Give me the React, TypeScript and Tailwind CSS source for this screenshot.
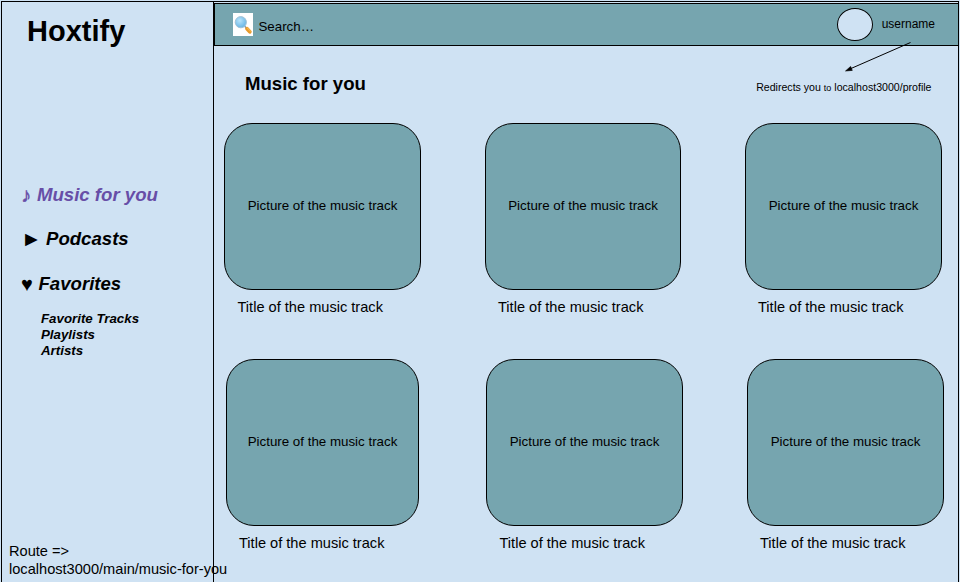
const tracks = [
  { card: "ml-[10px] w-[197px]", title: "ml-[23.5px]", cell: "w-[261px]" },
  { card: "ml-[10px] w-[196px]", title: "ml-[23px]", cell: "w-[260px]" },
  { card: "ml-[10px] w-[197px]", title: "ml-[23px]", cell: "w-[210px]" },
];

const moreTracks = [
  { card: "ml-[12px] w-[193px]", title: "ml-[25px]", cell: "w-[261px]" },
  { card: "ml-[11px] w-[197px]", title: "ml-[24.5px]", cell: "w-[260px]" },
  { card: "ml-[12px] w-[197px]", title: "ml-[25px]", cell: "w-[210px]" },
];

type Track = (typeof tracks)[number];

function TrackRow({ items }: { items: Track[] }) {
  return (
    <div className="flex h-[236px]">
      {items.map((t, i) => (
        <div key={i} className={`shrink-0 ${t.cell}`}>
          <div
            className={`flex h-[167px] items-center justify-center rounded-[28px] border border-black bg-[#76a5af] pb-[2px] text-[13.33px] leading-[16px] whitespace-nowrap ${t.card}`}
          >
            Picture of the music track
          </div>
          <div className={`mt-[8px] text-[14.6px] leading-[18px] whitespace-nowrap ${t.title}`}>
            Title of the music track
          </div>
        </div>
      ))}
    </div>
  );
}

function SearchIcon() {
  return (
    <svg width="20" height="23" viewBox="0 0 20 23" className="shrink-0">
      <defs>
        <radialGradient id="lens" cx="0.4" cy="0.35" r="0.7">
          <stop offset="0" stopColor="#b9e4fb" />
          <stop offset="1" stopColor="#62b2e4" />
        </radialGradient>
      </defs>
      <rect width="20" height="23" fill="#fff" />
      <path d="M11.5 13 L13.4 15" stroke="#8a9aa5" strokeWidth="1.6" />
      <path d="M14 15.8 L16.8 18.8" stroke="#e79a2b" strokeWidth="3.8" strokeLinecap="round" />
      <path d="M14.4 15.2 L17.4 18.2" stroke="#f6b64c" strokeWidth="1.2" strokeLinecap="round" />
      <circle cx="7.8" cy="9.2" r="5.6" fill="url(#lens)" stroke="#a3c3d6" strokeWidth="1" />
    </svg>
  );
}

function Sidebar() {
  return (
    <aside className="z-10 flex w-[212px] shrink-0 flex-col border-r border-black whitespace-nowrap">
      <h1 className="mt-[13px] ml-[25px] text-[29px] leading-[32px] font-bold">Hoxtify</h1>
      <nav className="mt-[136px] ml-[19px] text-[18.6px] leading-[24px] font-bold italic">
        <div className="flex h-[44px] text-[#674ea7]">
          <span className="w-[16px] text-[20.5px] [-webkit-text-stroke:0.5px_#674ea7]">♪</span>
          <span>Music for you</span>
        </div>
        <div className="flex h-[45px]">
          <span className="w-[25px] text-[21px]">►</span>
          <span>Podcasts</span>
        </div>
        <div className="flex h-[39px]">
          <span className="w-[17.5px] text-[20px]">♥</span>
          <span>Favorites</span>
        </div>
        <ul className="ml-[20px] text-[13.3px] leading-[16px]">
          <li>Favorite Tracks</li>
          <li>Playlists</li>
          <li>Artists</li>
        </ul>
      </nav>
      <div className="mt-auto mb-[4px] ml-[7px] text-[14.6px] leading-[17.5px]">
        Route =&gt;
        <br />
        localhost3000/main/music-for-you
      </div>
    </aside>
  );
}

function Header() {
  return (
    <header className="mt-px flex h-[43px] items-center border-y border-l border-black bg-[#76a5af]">
      <div className="ml-[18px] flex items-center">
        <SearchIcon />
        <span className="mt-[4px] ml-[5.5px] text-[13.3px] leading-[16px]">Search…</span>
      </div>
      <div className="mr-[23px] ml-auto flex items-center">
        <div className="h-[33px] w-[36px] rounded-[50%] border border-black bg-[#cfe2f3]" />
        <span className="-mt-[2px] ml-[9px] text-[12px] leading-[16px]">username</span>
      </div>
    </header>
  );
}

export default function App() {
  return (
    <div className="relative h-[582px] w-[960px] overflow-hidden bg-[#cfe2f3] pt-px pr-px pl-px font-['Liberation_Sans',Arial,sans-serif] text-black">
      <div className="flex h-[581px] border-x border-t border-black">
        <Sidebar />
        <main className="min-w-0 flex-1">
          <Header />
          <div className="flex h-[77px] justify-between">
            <h2 className="mt-[26px] ml-[31px] text-[18.6px] leading-[24px] font-bold">Music for you</h2>
            <p className="mt-[33px] mr-[26.5px] text-[10.6px] leading-[16px]">
              Redirects you <span className="text-[9px]">to</span> localhost3000/profile
            </p>
          </div>
          <TrackRow items={tracks} />
          <TrackRow items={moreTracks} />
        </main>
      </div>
      <svg className="absolute top-[38px] left-[840px]" width="76" height="38" viewBox="0 0 76 38">
        <path d="M70.5 4.5 L11 30.5" stroke="#000" strokeWidth="1" fill="none" />
        <path d="M5.5 33 L10.6 28.4 L12.3 32.4 Z" fill="#000" stroke="#000" strokeWidth="0.6" />
      </svg>
    </div>
  );
}
